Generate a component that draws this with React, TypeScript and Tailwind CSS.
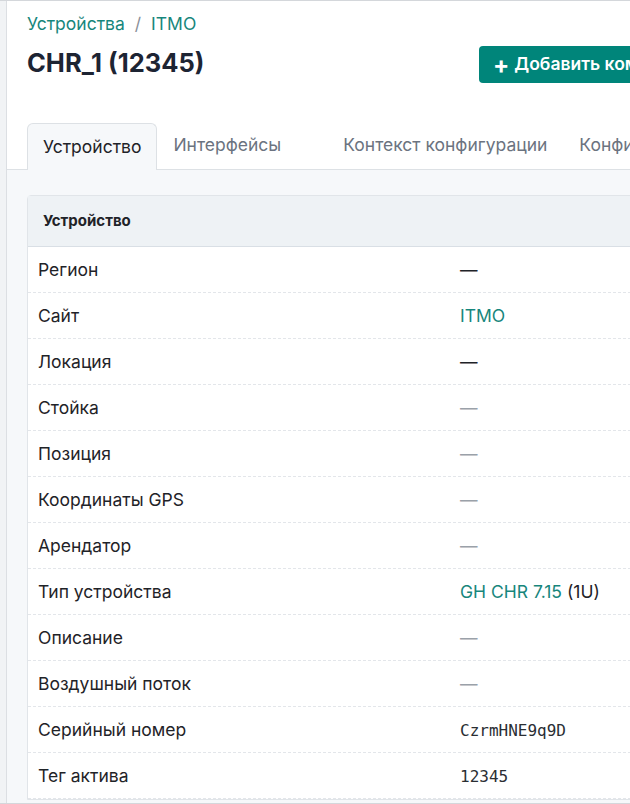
import React from "react";

type Row = { label: string; value: React.ReactNode };

const dash = <span className="text-[#1f2328]">—</span>;
const muted = <span className="text-[#9aa1a9]">—</span>;
const mono = "font-['DejaVu_Sans_Mono',monospace] text-[16px] text-[#2a2e33]";

const rows: Row[] = [
  { label: "Регион", value: dash },
  { label: "Сайт", value: <span className="text-[#17867c]">ITMO</span> },
  { label: "Локация", value: dash },
  { label: "Стойка", value: muted },
  { label: "Позиция", value: muted },
  { label: "Координаты GPS", value: muted },
  { label: "Арендатор", value: muted },
  {
    label: "Тип устройства",
    value: (
      <span>
        <span className="text-[#17867c]">GH CHR 7.15</span> (1U)
      </span>
    ),
  },
  { label: "Описание", value: muted },
  { label: "Воздушный поток", value: muted },
  { label: "Серийный номер", value: <span className={mono}>CzrmHNE9q9D</span> },
  { label: "Тег актива", value: <span className={mono}>12345</span> },
];

const tabs = ["Устройство", "Интерфейсы", "Контекст конфигурации", "Конфигурация"];

export default function App() {
  return (
    <div className="flex h-[804px] w-[630px] overflow-hidden border-t border-b border-[#d4d7db] bg-white font-['Inter',sans-serif] text-[#1f2328]">
      {/* left rail */}
      <div className="w-[7px] shrink-0 border-r border-[#dcdfe3] bg-[#f1f3f5]" />

      <div className="flex min-w-0 flex-1 flex-col overflow-hidden">
        {/* page header */}
        <div className="pl-5 pt-[10px]">
          <div className="flex items-center gap-[10px] text-[17.5px] leading-[26px] text-[#17867c]">
            <span>Устройства</span>
            <span className="text-[#8a9099]">/</span>
            <span>ITMO</span>
          </div>
          <div className="mt-[8px] grid grid-cols-[452px_max-content] items-start">
            <h1 className="pt-[3px] text-[25.5px] font-bold leading-[30px] text-[#1d2433]">CHR_1 (12345)</h1>
            <button className="mt-[1px] flex h-[37px] items-center gap-[5px] whitespace-nowrap rounded-[4px] bg-[#00857a] px-[14px] text-[17.5px] font-semibold text-white">
              <span className="text-[24px] font-bold leading-none">+</span>
              Добавить компоненты
            </button>
          </div>
        </div>

        {/* tabs */}
        <div className="mt-[40px] flex h-[47px] items-end whitespace-nowrap border-b border-[#dde1e5] px-5">
          {tabs.map((t, i) => (
            <div
              key={t}
              className={
                i === 0
                  ? "-mb-px flex h-[47px] items-center rounded-t-[6px] border border-b-0 border-[#dde1e5] bg-[#f6f8fa] px-[15px] text-[17.5px] text-[#1f2328]"
                  : i === 2
                  ? "ml-[30px] flex h-[47px] items-center px-[16px] text-[17.5px] text-[#6b7380]"
                  : "flex h-[47px] items-center px-[16px] text-[17.5px] text-[#6b7380]"
              }
            >
              {t}
            </div>
          ))}
        </div>

        {/* tab content */}
        <div className="flex-1 bg-[#f6f8fa] pl-5 pt-[25px]">
          <div className="w-[700px] rounded-tl-[4px] border border-[#e1e5e9] bg-white">
            <div className="flex h-[51px] items-center border-b border-[#d9dfe5] bg-[#eef2f5] px-[15px] text-[15px] font-bold text-[#1f2328]">
              Устройство
            </div>
            {rows.map((r) => (
              <div key={r.label} className="flex h-[46px] items-center border-b border-dashed border-[#e3e6ea] pt-[1px] text-[17.5px]">
                <div className="w-[432px] pl-[10px]">{r.label}</div>
                <div>{r.value}</div>
              </div>
            ))}
          </div>
        </div>
      </div>
    </div>
  );
}
